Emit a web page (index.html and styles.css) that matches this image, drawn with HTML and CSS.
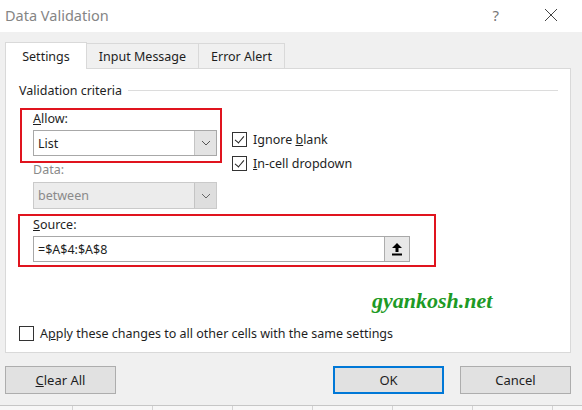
FILE: index.html
```html
<!DOCTYPE html>
<html lang="en">
<head>
  <meta charset="UTF-8">
  <title>Data Validation</title>
  <link rel="stylesheet" href="styles.css">
</head>
<body>
  <div class="titlebar">
    <span class="title">Data Validation</span>
    <span class="help">?</span>
    <svg class="close" width="14" height="14" viewBox="0 0 14 14">
      <path d="M1 1 L13 13 M13 1 L1 13" stroke="#444" stroke-width="1" fill="none"/>
    </svg>
  </div>

  <div class="main">
    <div class="tabs">
      <div class="tab active">Settings</div>
      <div class="tab tab-input">Input Message</div>
      <div class="tab tab-error">Error Alert</div>
    </div>

    <div class="panel">
      <div class="group-title">
        <span>Validation criteria</span>
        <div class="group-line"></div>
      </div>

      <div class="allow-row">
        <div class="mark mark-allow">
          <div class="field-label"><u>A</u>llow:</div>
          <div class="select">
            <span class="select-text">List</span>
            <span class="select-btn">
              <svg width="10" height="6" viewBox="0 0 10 6"><path d="M1 1 L5 5 L9 1" stroke="#555" fill="none"/></svg>
            </span>
          </div>
        </div>
        <div class="checks">
          <label class="check"><span class="box checked"></span><span>Ignore <u>b</u>lank</span></label>
          <label class="check"><span class="box checked"></span><span><u>I</u>n-cell dropdown</span></label>
        </div>
      </div>

      <div class="data-group">
        <div class="field-label disabled">Data:</div>
        <div class="select select-disabled">
          <span class="select-text">between</span>
          <span class="select-btn">
            <svg width="10" height="6" viewBox="0 0 10 6"><path d="M1 1 L5 5 L9 1" stroke="#666" fill="none"/></svg>
          </span>
        </div>
      </div>

      <div class="mark mark-source">
        <div class="field-label"><u>S</u>ource:</div>
        <div class="source-input">
          <span class="select-text">=$A$4:$A$8</span>
          <span class="ref-btn">
            <svg width="12" height="14" viewBox="0 0 12 14">
              <path d="M6 1 L11 6 L7.5 6 L7.5 10 L4.5 10 L4.5 6 L1 6 Z" fill="#000"/>
              <rect x="1" y="11.5" width="10" height="2" fill="#000"/>
            </svg>
          </span>
        </div>
      </div>

      <div class="watermark">gyankosh.net</div>

      <label class="check apply"><span class="box"></span><span>A<u>p</u>ply these changes to all other cells with the same settings</span></label>
    </div>

    <div class="buttons">
      <button class="btn"><u>C</u>lear All</button>
      <div class="btn-right">
        <button class="btn btn-ok">OK</button>
        <button class="btn">Cancel</button>
      </div>
    </div>
  </div>

  <div class="sheet"></div>
</body>
</html>
```

FILE: styles.css
```css
body {
  margin: 0;
  width: 582px;
  height: 410px;
  overflow: hidden;
  background: #f0f0f0;
  font-family: "Noto Sans", "Open Sans", sans-serif;
  font-size: 12.5px;
  color: #1e1e1e;
}
.titlebar {
  height: 32px;
  background: #fff;
  display: flex;
  align-items: center;
  padding-left: 5px;
  padding-bottom: 2px;
  box-sizing: border-box;
}
.title {
  font-size: 14.5px;
  color: #858585;
  flex: 1;
}
.help {
  font-size: 15px;
  color: #777;
  margin-right: 45px;
}
.close {
  margin-right: 24px;
}
.main {
  padding: 10px 11px 0 5px;
}
.tabs {
  display: flex;
  align-items: flex-end;
  height: 26px;
}
.tab {
  height: 25px;
  line-height: 25px;
  border: 1px solid #d9d9d9;
  border-bottom: none;
  text-align: center;
  background: #f0f0f0;
  margin-left: -1px;
  box-sizing: border-box;
}
.tab.active {
  width: 82px;
  height: 27px;
  line-height: 27px;
  margin-left: 0;
  margin-bottom: -1px;
  background: #fff;
  position: relative;
  z-index: 1;
}
.tab-input {
  width: 113px;
}
.tab-error {
  width: 87px;
}
.panel {
  height: 285px;
  box-sizing: border-box;
  border: 1px solid #d9d9d9;
  background: #fff;
  padding: 0 0 0 12px;
}
.group-title {
  display: flex;
  align-items: center;
  height: 18px;
  margin-top: 12px;
  padding-left: 1px;
}
.group-line {
  flex: 1;
  height: 1px;
  background: #dcdcdc;
  margin: 0 12px 0 6px;
}
.mark {
  border: 2px solid #e0141e;
  box-sizing: border-box;
}
.allow-row {
  display: flex;
  height: 55px;
  margin-top: 9px;
}
.mark-allow {
  width: 202px;
  height: 55px;
  margin-left: 2px;
  padding: 1px 3px 0 11px;
}
.field-label {
  height: 16px;
  line-height: 16px;
}
.field-label.disabled {
  color: #8a8a8a;
}
.select {
  margin-top: 3px;
  height: 26px;
  border: 1px solid #a8a8a8;
  box-sizing: border-box;
  display: flex;
  align-items: center;
  background: #fff;
}
.select-text {
  flex: 1;
  padding-left: 4px;
}
.select-btn {
  width: 21px;
  height: 100%;
  background: #e3e3e3;
  border-left: 1px solid #c4c4c4;
  display: flex;
  align-items: center;
  justify-content: center;
}
.select-disabled {
  background: #ececec;
  border-color: #cacaca;
  color: #8a8a8a;
}
.select-disabled .select-btn {
  background: #dedede;
}
.checks {
  margin-left: 10px;
  padding-top: 23px;
  display: flex;
  flex-direction: column;
  gap: 8px;
}
.check {
  display: flex;
  align-items: center;
  height: 16px;
}
.box {
  width: 15px;
  height: 15px;
  box-sizing: border-box;
  border: 1px solid #333;
  margin-right: 6px;
  position: relative;
  background: #fff;
}
.box.checked::after {
  content: "";
  position: absolute;
  left: 4px;
  top: 1px;
  width: 4px;
  height: 8px;
  border: solid #222;
  border-width: 0 1.5px 1.5px 0;
  transform: rotate(40deg);
}
.data-group {
  margin-top: -1px;
  padding-left: 15px;
  width: 184px;
}
.data-group .select {
  height: 27px;
  margin-top: 4px;
}
.mark-source {
  width: 418px;
  height: 53px;
  margin-top: 5px;
  padding: 1px 24px 0 13px;
}
.source-input {
  margin-top: 3px;
  height: 26px;
  border: 1px solid #a8a8a8;
  box-sizing: border-box;
  display: flex;
  align-items: center;
}
.ref-btn {
  width: 24px;
  height: 100%;
  background: #e8e8e8;
  border-left: 1px solid #adadad;
  display: flex;
  align-items: center;
  justify-content: center;
}
.watermark {
  margin-top: 21px;
  padding-left: 354px;
  height: 28px;
  font-family: "Liberation Serif", serif;
  font-style: italic;
  font-weight: bold;
  font-size: 22px;
  color: #1d9a25;
}
.apply {
  margin-top: 9px;
  margin-left: 1px;
}
.buttons {
  display: flex;
  justify-content: space-between;
  margin-top: 13px;
}
.btn-right {
  display: flex;
  gap: 16px;
}
.btn {
  width: 111px;
  height: 28px;
  box-sizing: border-box;
  border: 1px solid #adadad;
  background: #e1e1e1;
  font-family: inherit;
  font-size: 13px;
  color: #1e1e1e;
  padding: 0;
}
.btn-ok {
  border: 2px solid #0078d7;
}
.sheet {
  position: absolute;
  left: 0;
  top: 405px;
  width: 582px;
  height: 5px;
  border-top: 1px solid #c6c6c6;
  background: repeating-linear-gradient(90deg, #f7f7f7 0, #f7f7f7 72px, #d4d4d4 72px, #d4d4d4 73px, #f7f7f7 73px, #f7f7f7 80px);
}
```
